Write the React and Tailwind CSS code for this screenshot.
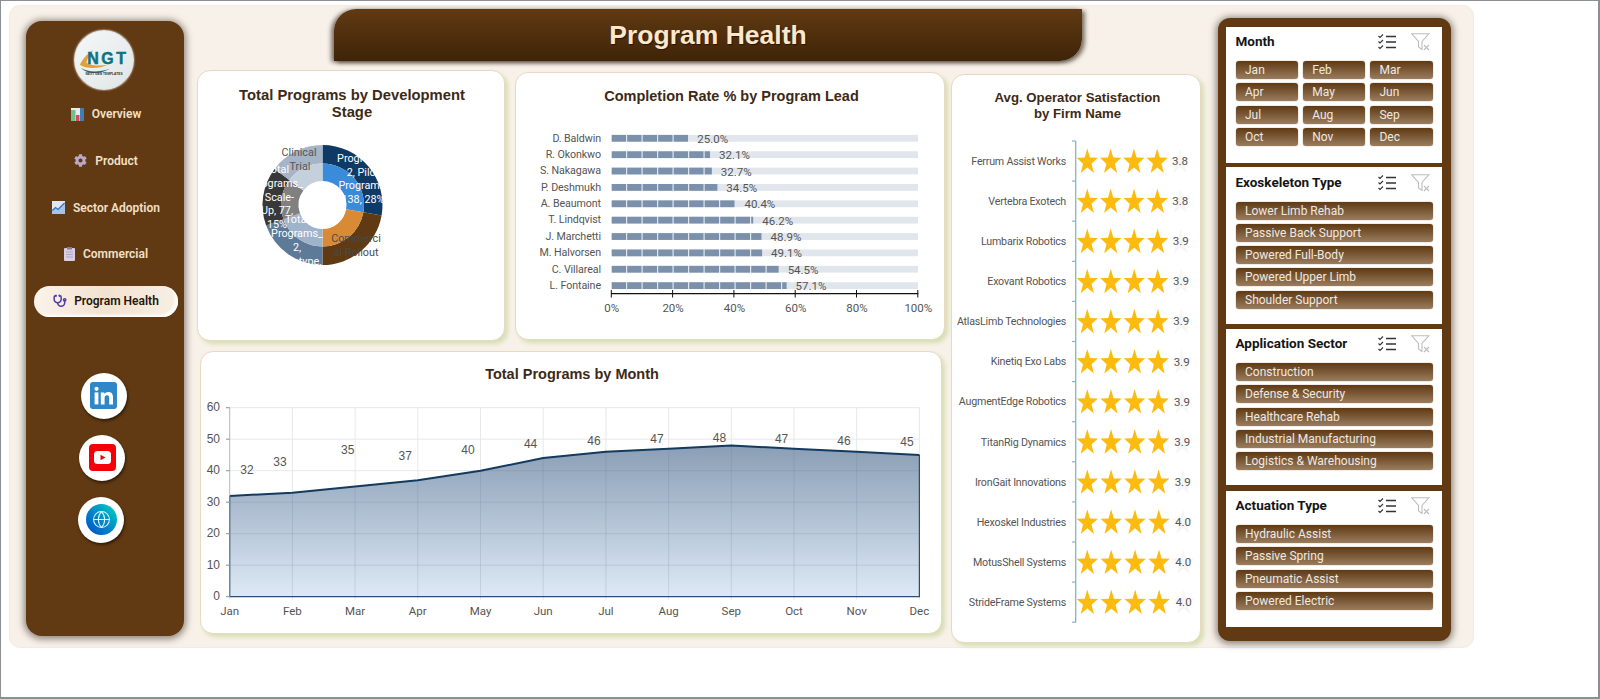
import React from "react";
import { Stethoscope, Globe } from "lucide-react";
import { FaCog } from "react-icons/fa";

const polar = (r, a) => {
  const t = ((a - 90) * Math.PI) / 180;
  return [322.5 + r * Math.cos(t), 205 + r * Math.sin(t)];
};
const ring = (r0, r1, a0, a1) => {
  const [x0, y0] = polar(r1, a0);
  const [x1, y1] = polar(r1, a1);
  const [x2, y2] = polar(r0, a1);
  const [x3, y3] = polar(r0, a0);
  const l = a1 - a0 > 180 ? 1 : 0;
  return `M${x0} ${y0}A${r1} ${r1} 0 ${l} 1 ${x1} ${y1}L${x2} ${y2}A${r0} ${r0} 0 ${l} 0 ${x3} ${y3}Z`;
};
const SEG = [
  [0, 100, "#0f3a66", "#3a8bd9"],
  [100, 180, "#5f3a12", "#d98a35"],
  [180, 250, "#5d7a99", "#9fb3cb"],
  [250, 307, "#383838", "#808080"],
  [307, 360, "#a5b4c6", "#c4d0dc"],
];
const DONUT_TEXT = [
  ["Clinical", 299, 153.5, "#555"],
  ["Trial", 300, 167.5, "#555"],
  ["Programs_", 363, 159.5, "#fff"],
  ["2, Pilot", 363, 173, "#fff"],
  ["Programs,", 363, 186.5, "#fff"],
  ["138, 28%", 363, 200.5, "#fff"],
  ["Commerci", 356, 239.5, "#4a4a4a"],
  ["al Rollout", 356, 253.5, "#4a4a4a"],
  ["Total", 277, 170.5, "#fff"],
  ["Programs_", 277, 184.5, "#fff"],
  [", Scale-", 277, 198, "#fff"],
  ["Up, 77,", 277, 211.5, "#fff"],
  ["15%", 277, 225.5, "#fff"],
  ["Total", 297, 220.5, "#fff"],
  ["Programs_", 297, 234.5, "#fff"],
  ["2,", 297, 248, "#fff"],
  ["Prototype,", 297, 262.5, "#fff"],
];

const LEADS = [
  ["D. Baldwin", 25.0],
  ["R. Okonkwo", 32.1],
  ["S. Nakagawa", 32.7],
  ["P. Deshmukh", 34.5],
  ["A. Beaumont", 40.4],
  ["T. Lindqvist", 46.2],
  ["J. Marchetti", 48.9],
  ["M. Halvorsen", 49.1],
  ["C. Villareal", 54.5],
  ["L. Fontaine", 57.1],
];

const FIRMS = [
  ["Ferrum Assist Works", "3.8"],
  ["Vertebra Exotech", "3.8"],
  ["Lumbarix Robotics", "3.9"],
  ["Exovant Robotics", "3.9"],
  ["AtlasLimb Technologies", "3.9"],
  ["Kinetiq Exo Labs", "3.9"],
  ["AugmentEdge Robotics", "3.9"],
  ["TitanRig Dynamics", "3.9"],
  ["IronGait Innovations", "3.9"],
  ["Hexoskel Industries", "4.0"],
  ["MotusShell Systems", "4.0"],
  ["StrideFrame Systems", "4.0"],
];

const MONTHS = ["Jan", "Feb", "Mar", "Apr", "May", "Jun", "Jul", "Aug", "Sep", "Oct", "Nov", "Dec"];
const AREA = [32, 33, 35, 37, 40, 44, 46, 47, 48, 47, 46, 45];
const AREA_LABEL = [
  [247, 471], [280, 462.7], [347.7, 450.7], [405.3, 456.7], [468, 451], [530.6, 445],
  [594, 442], [657, 440], [719.4, 438.8], [781.6, 440], [844, 442], [907, 443],
];

const starPath = (cx, cy, Rx, Ry) => {
  let d = "";
  for (let i = 0; i < 10; i++) {
    const k = i % 2 ? 0.4 : 1;
    const t = (-90 + i * 36) * (Math.PI / 180);
    d += `${i ? "L" : "M"}${cx + Rx * k * Math.cos(t)} ${cy + Ry * k * Math.sin(t)}`;
  }
  return d + "Z";
};

function DonutCard() {
  return (
    <svg viewBox="198 120 306 220" className="block w-[306px] h-[220px]">
      {SEG.map((s) => (
        <g key={s[0]}>
          <path d={ring(41.5, 60, s[0], s[1])} fill={s[2]} />
          <path d={ring(24, 41.5, s[0], s[1])} fill={s[3]} />
        </g>
      ))}
      {DONUT_TEXT.map((t, i) => (
        <text key={i} x={t[1]} y={t[2]} fill={t[3]} textAnchor="middle" dominantBaseline="middle" className="text-[10.8px]">
          {t[0]}
        </text>
      ))}
    </svg>
  );
}

function BarsCard() {
  const x0 = 611.7;
  const w = 306.3;
  return (
    <svg viewBox="516 106 428 233" className="block w-[428px] h-[233px]">
      {LEADS.map(([name, v], i) => {
        const y = 138.3 + i * 16.37;
        const end = x0 + (v / 100) * w;
        const segs = [];
        for (let s = x0; s < end; s += 15.5) {
          segs.push(<rect key={s} x={s} y={y - 3.4} width={Math.min(14.3, end - s)} height={6.8} fill="#7b91ab" />);
        }
        return (
          <g key={name}>
            <rect x={x0} y={y - 3.4} width={w} height={6.8} fill="#e1e6ec" />
            {segs}
            <text x={601} y={y + 0.5} textAnchor="end" dominantBaseline="middle" className="text-[10.7px] tracking-[-0.1px] fill-[#555]">{name}</text>
            <text x={end + 9} y={y + 1.5} dominantBaseline="middle" className="text-[11.5px] fill-[#555]">{v.toFixed(1)}%</text>
          </g>
        );
      })}
      <line x1={611} x2={918.3} y1={293.7} y2={293.7} stroke="#111" strokeWidth="1.3" />
      {[0, 20, 40, 60, 80, 100].map((p) => {
        const x = 611.3 + p * 3.065;
        return (
          <g key={p}>
            <line x1={x} x2={x} y1={290} y2={297.5} stroke="#111" strokeWidth="1" />
            <text x={x + 0.5} y={309} textAnchor="middle" dominantBaseline="middle" className="text-[11.5px] fill-[#555]">{p}%</text>
          </g>
        );
      })}
    </svg>
  );
}

function AreaCard() {
  const X = (i) => 229.7 + i * 62.7;
  const Y = (v) => 596.7 - v * 3.15;
  const line = AREA.map((v, i) => `${i ? "L" : "M"}${X(i)} ${Y(v)}`).join("");
  const shape = `${line}L${X(11)} ${Y(0)}L${X(0)} ${Y(0)}Z`;
  return (
    <svg viewBox="201 384 740 249" className="block w-[740px] h-[249px]">
      <defs>
        <linearGradient id="areaFill" x1="0" y1="0" x2="0" y2="1">
          <stop offset="0" stopColor="#8a9eb5" />
          <stop offset="1" stopColor="#dde9f6" />
        </linearGradient>
        <clipPath id="areaClip">
          <path d={shape} />
        </clipPath>
      </defs>
      {[10, 20, 30, 40, 50, 60].map((v) => (
        <line key={v} x1={226} x2={X(11)} y1={Y(v)} y2={Y(v)} stroke="#e6e8ec" />
      ))}
      {MONTHS.map((m, i) => (
        <line key={m} x1={X(i)} x2={X(i)} y1={Y(60)} y2={Y(0) + 3} stroke="#e6e8ec" />
      ))}
      <path d={shape} fill="url(#areaFill)" />
      <g clipPath="url(#areaClip)">
        {[10, 20, 30, 40, 50].map((v) => (
          <line key={v} x1={X(0)} x2={X(11)} y1={Y(v)} y2={Y(v)} stroke="#60738a" strokeOpacity="0.16" />
        ))}
        {MONTHS.map((m, i) => (
          <line key={m} x1={X(i)} x2={X(i)} y1={Y(60)} y2={Y(0)} stroke="#60738a" strokeOpacity="0.18" />
        ))}
      </g>
      <path d={`M${X(0)} ${Y(AREA[0])}L${X(0)} ${Y(0)}L${X(11)} ${Y(0)}L${X(11)} ${Y(AREA[11])}`} fill="none" stroke="#2a4f72" strokeWidth="1.2" />
      <path d={line} fill="none" stroke="#143a5e" strokeWidth="2" />
      <line x1={X(0)} x2={X(0)} y1={Y(60)} y2={Y(0)} stroke="#9aa8ba" strokeWidth="1" strokeOpacity="0.7" />
      {[0, 10, 20, 30, 40, 50, 60].map((v) => (
        <g key={v}>
          <line x1={226} x2={X(0)} y1={Y(v)} y2={Y(v)} stroke="#8a97a8" />
          <text x={220} y={Y(v) + 0.5} textAnchor="end" dominantBaseline="middle" className="text-[12px] fill-[#555] font-['Liberation_Sans',sans-serif]">{v}</text>
        </g>
      ))}
      {MONTHS.map((m, i) => (
        <text key={m} x={X(i)} y={612} textAnchor="middle" dominantBaseline="middle" className="text-[11.5px] fill-[#555]">{m}</text>
      ))}
      {AREA.map((v, i) => (
        <text key={i} x={AREA_LABEL[i][0]} y={AREA_LABEL[i][1]} textAnchor="middle" dominantBaseline="middle" className="text-[12px] fill-[#555] font-['Liberation_Sans',sans-serif]">{v}</text>
      ))}
    </svg>
  );
}

function StarsCard() {
  return (
    <svg viewBox="952 121 248 521" className="block w-[248px] h-[521px]">
      <line x1={1075.7} x2={1075.7} y1={141} y2={622.5} stroke="#7db6cf" strokeWidth="1.3" />
      {Array.from({ length: 13 }).map((_, i) => (
        <line key={i} x1={1072} x2={1075.7} y1={141 + i * 40.1} y2={141 + i * 40.1} stroke="#7db6cf" strokeWidth="1.2" />
      ))}
      {FIRMS.map(([name, v], i) => {
        const y = 162 + i * 40.1;
        const step = 23.3 + i * 0.06;
        const tx = 1180 + i * 0.33;
        return (
          <g key={name}>
            <text x={1066} y={y} textAnchor="end" dominantBaseline="middle" className="text-[10.7px] tracking-[-0.22px] fill-[#555]">{name}</text>
            {[0, 1, 2, 3].map((k) => (
              <path key={k} d={starPath(1087.3 + k * step, y, 11.2, 13.6)} fill="#fdbb10" />
            ))}
            <path d={starPath(tx, y, 11.2, 13.6)} fill="#f6f6f6" />
            <text x={tx} y={y} textAnchor="middle" dominantBaseline="middle" className="text-[11.5px] fill-[#555]">{v}</text>
          </g>
        );
      })}
    </svg>
  );
}

function ChecklistIcon() {
  return (
    <svg viewBox="0 0 18 16" className="w-[18px] h-[16px]" fill="none" stroke="#333" strokeWidth="1.1">
      <path d="M0.5 2l1.5 1.5L5 .5M0.5 7.5L2 9l3-3M0.5 13L2 14.5l3-3" />
      <path d="M8 2.5h10M8 8h10M8 13.5h10" strokeWidth="1.3" />
    </svg>
  );
}

function FilterIcon() {
  return (
    <svg viewBox="0 0 19 18" className="w-[19px] h-[18px]" fill="none" stroke="#bdbdbd" strokeWidth="1.1">
      <path d="M.8.8h17L11 8.5V16.5L7.5 14V8.5z" />
      <path d="M13 12l5 5M18 12l-5 5" strokeWidth="1.1" />
    </svg>
  );
}

function Slicer({ title, items, cols, height, mt }) {
  return (
    <section className={`bg-white px-[9.5px] ${height} ${mt}`}>
      <div className="flex items-center h-[30px] pt-[1px]">
        <div className="flex-1 text-[13.5px] font-bold text-[#151515] leading-none">{title}</div>
        <div className="mr-[15px]"><ChecklistIcon /></div>
        <div className="mr-[3px]"><FilterIcon /></div>
      </div>
      <div className={cols === 3 ? "grid grid-cols-3 gap-x-[4.7px] gap-y-[4.3px] mt-[4.5px]" : "flex flex-col gap-[4.3px] mt-[4.5px]"}>
        {items.map((t) => (
          <div key={t} className="h-[18px] rounded-[3px] bg-linear-to-b from-[#5f3a12] to-[#9a7d5e] pl-[9.5px] text-[12px] leading-[18px] text-[#efe9e2] whitespace-nowrap shadow-[0_0_1px_#6b4a26]">
            {t}
          </div>
        ))}
      </div>
    </section>
  );
}

function NavItem({ icon, label, active }) {
  return (
    <div className={`flex items-center justify-center h-[31px] w-[144px] ml-[8.5px] mb-[15.8px] rounded-full ${active ? "bg-linear-to-r from-[#fbf3ea] via-[#f2e2d0] to-[#f8efe4] text-[#24160a] shadow-[inset_-3px_-2px_3px_#fff]" : "text-[#f3e0c8]"} text-[12px] font-semibold whitespace-nowrap`}>
      {icon}
      <span>{label}</span>
    </div>
  );
}

function SocialCircle({ ml, children }) {
  return (
    <div className={`w-[46px] h-[46px] rounded-full bg-white flex items-center justify-center shadow-[1px_2px_3px_rgba(0,0,0,0.5)] ${ml}`}>
      {children}
    </div>
  );
}

export default function App() {
  const card = "bg-white border border-[#e9d8c2] rounded-[13px] shadow-[3px_3px_4px_#d6dfb2]";
  const cardTitle = "font-['Liberation_Sans',sans-serif] font-bold text-center text-[#3d2a16]";
  return (
    <div className="w-[1600px] h-[699px] bg-white border-t border-l border-r-2 border-b-2 border-[#8c9094] overflow-hidden font-['Roboto',sans-serif] box-border">
      <div className="ml-[8px] mt-[4px] w-[1465px] h-[643px] bg-[#f8f1e9] rounded-[11px] border border-[#f1ebe3] flex items-start pl-[15.5px] pt-[3px] box-border">
        {/* left navigation */}
        <aside className="w-[158px] h-[615px] mt-[12px] shrink-0 rounded-[16px] bg-[#613a13] shadow-[0_1px_7px_2px_rgba(70,60,50,0.6)] pt-[9px]">
          <div className="w-[60px] h-[60px] ml-[48px] rounded-full bg-linear-to-br from-[#f6f8f8] to-[#dfe5e6] border border-[#e6e6e6] mb-[8.5px] shadow-[0_0_2px_#fff]">
            <svg viewBox="0 0 60 60" className="w-full h-full">
              <path d="M5 35c4-8 10-13 14-15-4 5-7 9-7 13 6 3 13 3 22 2-8 4-22 5-29 0z" fill="#e0a13c" />
              <path d="M6 38c8 5 18 5 30 1-10 6-24 6-30-1z" fill="#1f6b86" />
              <text x="34" y="34" textAnchor="middle" stroke="#0e7285" strokeWidth="0.5" className="text-[16.5px] font-bold tracking-[2.6px] fill-[#0e7285] font-['Liberation_Sans',sans-serif]">NGT</text>
              <text x="30" y="45" textAnchor="middle" className="text-[3.4px] font-bold fill-[#333] font-['Liberation_Sans',sans-serif]">NEXT GEN TEMPLATES</text>
            </svg>
          </div>
          <NavItem
            label="Overview"
            icon={
              <svg viewBox="0 0 13 13" className="w-[13px] h-[13px] mr-[8px] shrink-0">
                <rect width="13" height="13" fill="#e6edf2" />
                <rect x="0" y="2" width="4.5" height="11" fill="#6fc08a" />
                <rect x="5" y="7" width="3.5" height="6" fill="#d24a6a" />
                <rect x="9" y="0" width="4" height="13" fill="#3f7fb5" />
              </svg>
            }
          />
          <NavItem label="Product" icon={<FaCog className="w-[13px] h-[13px] mr-[8px] text-[#b8aac8] shrink-0" />} />
          <NavItem
            label="Sector Adoption"
            icon={
              <svg viewBox="0 0 13 13" className="w-[13px] h-[13px] mr-[8px] shrink-0">
                <rect width="13" height="13" fill="#dfe8f4" />
                <path d="M0 13V9l3.5-3 2.5 2 7-7v12z" fill="#a9c3e4" />
                <path d="M.5 9.5L3.5 6.5 6 8.5l6.5-6.5" fill="none" stroke="#3f6fc0" strokeWidth="1.2" />
              </svg>
            }
          />
          <NavItem
            label="Commercial"
            icon={
              <svg viewBox="0 0 11 14" className="w-[11px] h-[14px] mr-[8px] shrink-0">
                <rect y="1" width="11" height="13" rx="1" fill="#d9cfe4" />
                <rect x="3" width="5" height="2.5" fill="#8a7a94" />
                <path d="M2 5h7M2 7.5h7M2 10h7" stroke="#a99bb8" strokeWidth="0.8" />
              </svg>
            }
          />
          <NavItem active label="Program Health" icon={<Stethoscope className="w-[14px] h-[14px] mr-[7px] text-[#4d3cb0] shrink-0" strokeWidth={2.6} />} />
          <div className="mt-[56px] flex flex-col gap-[16px]">
            <SocialCircle ml="ml-[55px]">
              <svg viewBox="0 0 27 27" className="w-[27px] h-[27px]">
                <rect width="27" height="27" rx="3" fill="#2f86c8" />
                <circle cx="6.5" cy="6.8" r="2.1" fill="#fff" />
                <rect x="4.6" y="10.4" width="3.8" height="12" fill="#fff" />
                <path d="M10.8 10.4h3.6v1.7c.7-1.2 2.2-2 3.9-2 3.4 0 4.7 2.1 4.7 5.5v6.8h-3.8v-6.2c0-1.6-.5-2.9-2.1-2.9-1.8 0-2.5 1.3-2.5 3v6.1h-3.8z" fill="#fff" />
              </svg>
            </SocialCircle>
            <SocialCircle ml="ml-[53.5px]">
              <svg viewBox="0 0 27 27" className="w-[27px] h-[27px]">
                <rect width="27" height="27" rx="4" fill="#f50008" />
                <rect x="5" y="7" width="17" height="13" rx="3.5" fill="#fff" />
                <path d="M11.5 10.8l5 2.7-5 2.7z" fill="#f50008" />
              </svg>
            </SocialCircle>
            <SocialCircle ml="ml-[52.5px]">
              <div className="w-[31px] h-[31px] rounded-full bg-linear-to-tr from-[#0048c8] via-[#0a88c8] to-[#14d8b8] flex items-center justify-center">
                <Globe className="w-[19px] h-[19px] text-[#dff4fa]" strokeWidth={1.3} />
              </div>
            </SocialCircle>
          </div>
        </aside>

        {/* centre */}
        <div className="ml-[13.5px] w-[748px] shrink-0">
          <header className="ml-[137px] w-[748px] h-[52px] pt-[2px] rounded-tl-[22px] rounded-br-[22px] bg-linear-to-b from-[#613a13] to-[#3f2408] shadow-[-3px_1px_4px_rgba(60,50,40,0.65),3px_2px_4px_rgba(60,50,40,0.65)] flex items-center justify-center">
            <h1 className="font-['Liberation_Sans',sans-serif] font-bold text-[26.5px] text-[#fbe8cc] [text-shadow:1px_1px_1px_#2a1604]">Program Health</h1>
          </header>
          <div className="flex flex-col w-[748px]">
            <div className="flex items-start mt-[9px]">
              <div className={`${card} w-[308px] h-[271px] shrink-0`}>
                <div className={`${cardTitle} text-[14.8px] leading-[17px] pt-[15.5px] pl-[2px] h-[49px]`}>
                  Total Programs by Development<br />Stage
                </div>
                <DonutCard />
              </div>
              <div className={`${card} w-[430px] h-[268px] ml-[10px] mt-[2px] shrink-0`}>
                <div className={`${cardTitle} text-[14.5px] leading-[20px] pt-[13px] pl-[3px] h-[33px]`}>Completion Rate % by Program Lead</div>
                <BarsCard />
              </div>
            </div>
            <div className={`${card} w-[742px] h-[283px] ml-[3px] mt-[10px]`}>
              <div className={`${cardTitle} text-[14.5px] leading-[20px] pt-[12px] pl-[2px] h-[32px]`}>Total Programs by Month</div>
              <AreaCard />
            </div>
          </div>
        </div>

        {/* third column */}
        <div className={`${card} w-[250px] h-[569px] ml-[6px] mt-[65px] shrink-0`}>
          <div className={`${cardTitle} text-[13.2px] leading-[16px] pt-[14.5px] pl-[3px] h-[46px]`}>
            Avg. Operator Satisfaction<br />by Firm Name
          </div>
          <StarsCard />
        </div>

        {/* filters */}
        <aside className="w-[233px] h-[623px] ml-[16.5px] mt-[9px] shrink-0 rounded-[12px] bg-[#613a13] shadow-[0_1px_7px_2px_rgba(70,60,50,0.6)] px-[8.5px] pt-[8.5px]">
          <Slicer title="Month" items={MONTHS} cols={3} height="h-[136px]" mt="" />
          <Slicer title="Exoskeleton Type" items={["Lower Limb Rehab", "Passive Back Support", "Powered Full-Body", "Powered Upper Limb", "Shoulder Support"]} height="h-[157px]" mt="mt-[4.5px]" />
          <Slicer title="Application Sector" items={["Construction", "Defense & Security", "Healthcare Rehab", "Industrial Manufacturing", "Logistics & Warehousing"]} height="h-[156px]" mt="mt-[4.5px]" />
          <Slicer title="Actuation Type" items={["Hydraulic Assist", "Passive Spring", "Pneumatic Assist", "Powered Electric"]} height="h-[136px]" mt="mt-[6px]" />
        </aside>
      </div>
    </div>
  );
}
